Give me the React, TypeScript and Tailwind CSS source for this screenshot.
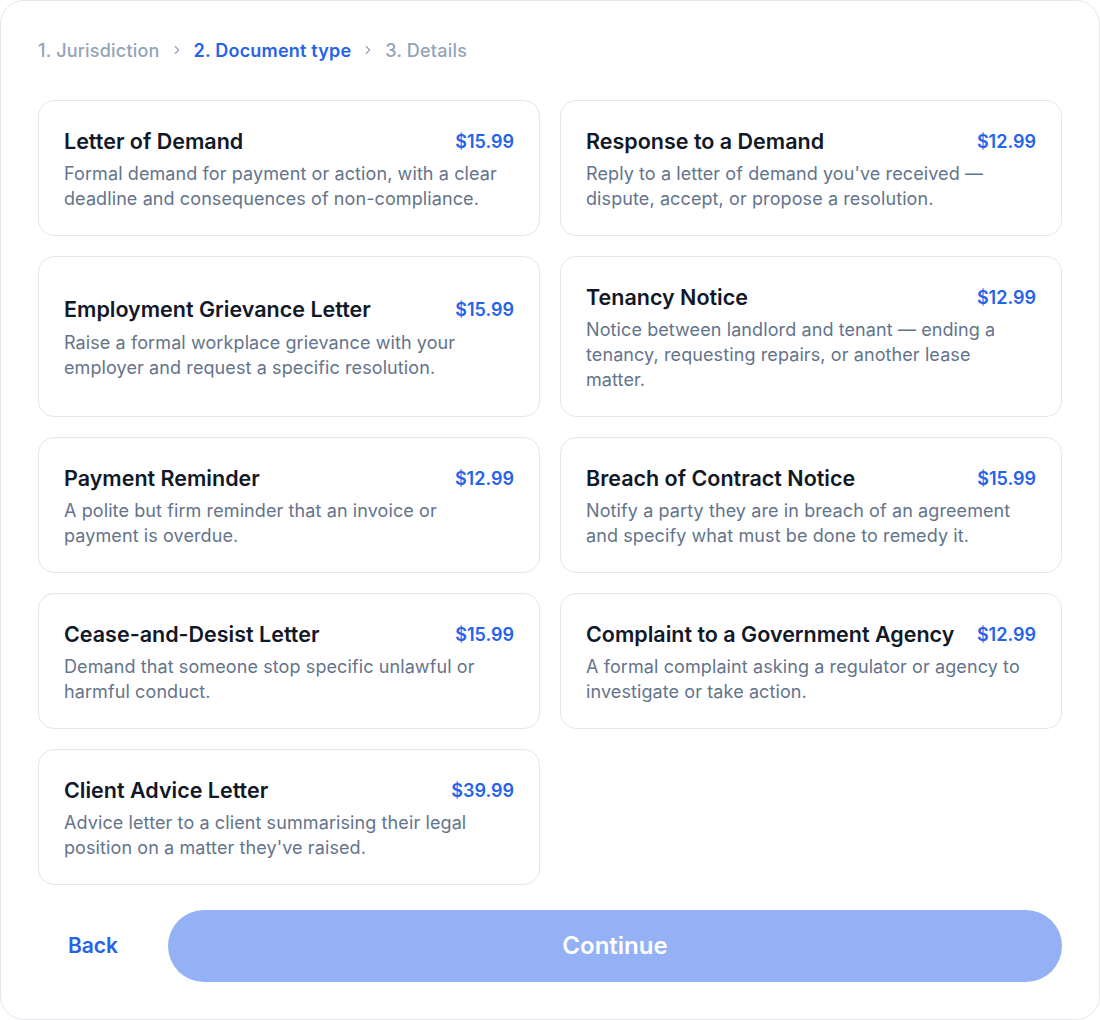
import React from "react";

const docs = [
  { t: "Letter of Demand", p: "$15.99", d: "Formal demand for payment or action, with a clear deadline and consequences of non-compliance." },
  { t: "Response to a Demand", p: "$12.99", d: "Reply to a letter of demand you've received — dispute, accept, or propose a resolution." },
  { t: "Employment Grievance Letter", p: "$15.99", d: "Raise a formal workplace grievance with your employer and request a specific resolution." },
  { t: "Tenancy Notice", p: "$12.99", d: "Notice between landlord and tenant — ending a tenancy, requesting repairs, or another lease matter." },
  { t: "Payment Reminder", p: "$12.99", d: "A polite but firm reminder that an invoice or payment is overdue." },
  { t: "Breach of Contract Notice", p: "$15.99", d: "Notify a party they are in breach of an agreement and specify what must be done to remedy it." },
  { t: "Cease-and-Desist Letter", p: "$15.99", d: "Demand that someone stop specific unlawful or harmful conduct." },
  { t: "Complaint to a Government Agency", p: "$12.99", d: "A formal complaint asking a regulator or agency to investigate or take action." },
  { t: "Client Advice Letter", p: "$39.99", d: "Advice letter to a client summarising their legal position on a matter they've raised." },
];

function Chevron() {
  return (
    <svg width="14" height="14" viewBox="0 0 24 24" fill="none" stroke="#94a3b8" strokeWidth="2" strokeLinecap="round" strokeLinejoin="round">
      <path d="m9 18 6-6-6-6" />
    </svg>
  );
}

export default function App() {
  return (
    <div className="w-[1100px] h-[1020px] bg-white" style={{ fontFamily: "Inter, 'Noto Sans', sans-serif" }}>
      <div className="h-full rounded-[24px] border border-[#e5e7eb] bg-white px-[37px] pt-[36px] pb-[37px] flex flex-col">
        <div className="flex items-center h-[26px] text-[18px] tracking-[0.2px] font-medium">
          <span className="text-[#94a3b8]">1. Jurisdiction</span>
          <span className="mx-[10px] flex items-center"><Chevron /></span>
          <span className="text-[#2563eb] font-semibold">2. Document type</span>
          <span className="mx-[10px] flex items-center"><Chevron /></span>
          <span className="text-[#94a3b8]">3. Details</span>
        </div>
        <div className="mt-[37px] grid grid-cols-2 gap-[20px]">
          {docs.map((x) => (
            <div key={x.t} className="rounded-[16px] border border-[#e5e7eb] bg-white px-[25px] py-[24px] flex flex-col justify-center">
              <div className="flex items-center justify-between h-[32px]">
                <span className="text-[21.5px] font-semibold text-[#111827]">{x.t}</span>
                <span className="text-[18px] font-semibold text-[#2563eb]">{x.p}</span>
              </div>
              <p className="mt-[4px] text-[18px] tracking-[0.1px] leading-[25px] text-[#64748b] pr-[6px]">{x.d}</p>
            </div>
          ))}
        </div>
        <div className="mt-[25px] flex items-center gap-[20px]">
          <button className="w-[110px] h-[72px] text-[21px] font-semibold text-[#2563eb]">Back</button>
          <button className="flex-1 h-[72px] rounded-full bg-[#93b1f4] text-white text-[24px] font-semibold">Continue</button>
        </div>
      </div>
    </div>
  );
}
